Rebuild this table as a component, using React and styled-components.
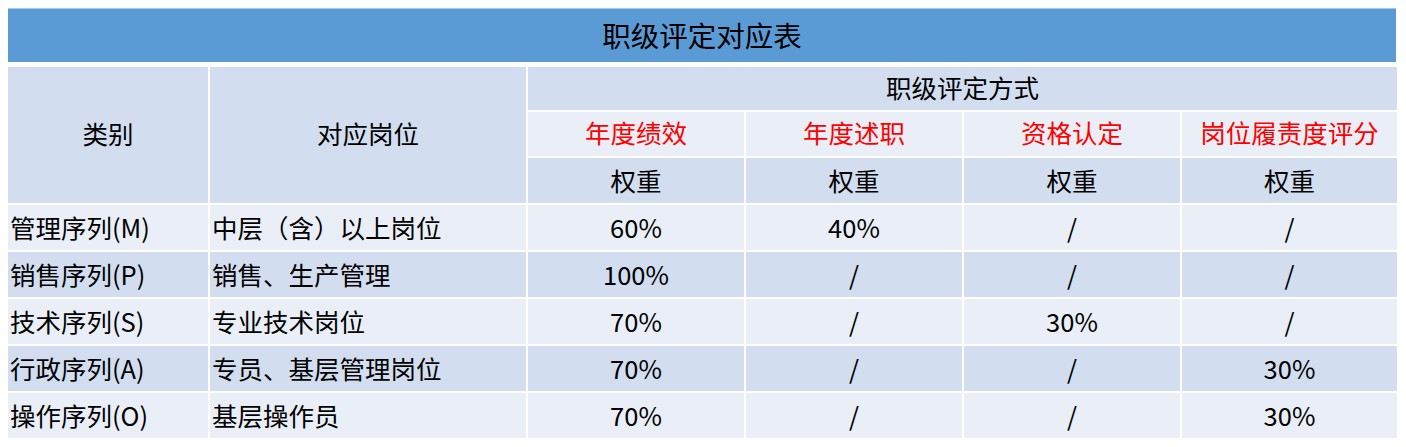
import styled, { createGlobalStyle } from "styled-components";

const GlobalStyle = createGlobalStyle`
  body {
    margin: 8px;
    background: #ffffff;
    font-family: "Noto Sans CJK SC", "Noto Sans", sans-serif;
    color: #000;
  }
`;

const Wrapper = styled.div`
  width: 1388px;
`;

const Title = styled.div`
  height: 54px;
  background-color: #5b9bd5;
  border-top: 1px solid #a9c8e8;
  box-sizing: border-box;
  display: flex;
  align-items: center;
  justify-content: center;
  padding-bottom: 3px;
  font-size: 28.5px;
  margin-bottom: 5px;
`;

const Grid = styled.div`
  display: grid;
  grid-template-columns: 200px 316px 216px 216px 216px 215px;
  grid-template-rows: 43px 44px 45px repeat(5, 45px);
  gap: 2px;
`;

const Cell = styled.div`
  background-color: ${({ $dark }) => ($dark ? "#d2deef" : "#eaeff7")};
  display: flex;
  align-items: center;
  justify-content: ${({ $left }) => ($left ? "flex-start" : "center")};
  box-sizing: border-box;
  padding-left: ${({ $left }) => ($left ? "2px" : "0")};
  padding-bottom: ${({ $head }) => ($head ? "5px" : "2px")};
  font-size: 25.5px;
  color: ${({ $red }) => ($red ? "#ff0000" : "#000")};
  white-space: nowrap;
  grid-row: ${({ $rows }) => ($rows ? `span ${$rows}` : "auto")};
  grid-column: ${({ $cols }) => ($cols ? `span ${$cols}` : "auto")};
`;

const methods = ["年度绩效", "年度述职", "资格认定", "岗位履责度评分"];

const rows = [
  ["管理序列(M)", "中层（含）以上岗位", "60%", "40%", "/", "/"],
  ["销售序列(P)", "销售、生产管理", "100%", "/", "/", "/"],
  ["技术序列(S)", "专业技术岗位", "70%", "/", "30%", "/"],
  ["行政序列(A)", "专员、基层管理岗位", "70%", "/", "/", "30%"],
  ["操作序列(O)", "基层操作员", "70%", "/", "/", "30%"],
];

const App = () => {
  return (
    <>
      <GlobalStyle />
      <Wrapper>
        <Title>职级评定对应表</Title>
        <Grid>
          <Cell $dark $head $rows={3}>类别</Cell>
          <Cell $dark $head $rows={3}>对应岗位</Cell>
          <Cell $dark $head $cols={4}>职级评定方式</Cell>
          {methods.map(m => (
            <Cell key={m} $head $red>{m}</Cell>
          ))}
          {methods.map(m => (
            <Cell key={m + "w"} $dark>权重</Cell>
          ))}
          {rows.map((r, i) =>
            r.map((v, j) => (
              <Cell key={i + "-" + j} $dark={i % 2 === 1} $left={j < 2}>
                {v}
              </Cell>
            ))
          )}
        </Grid>
      </Wrapper>
    </>
  );
};

export default App;
